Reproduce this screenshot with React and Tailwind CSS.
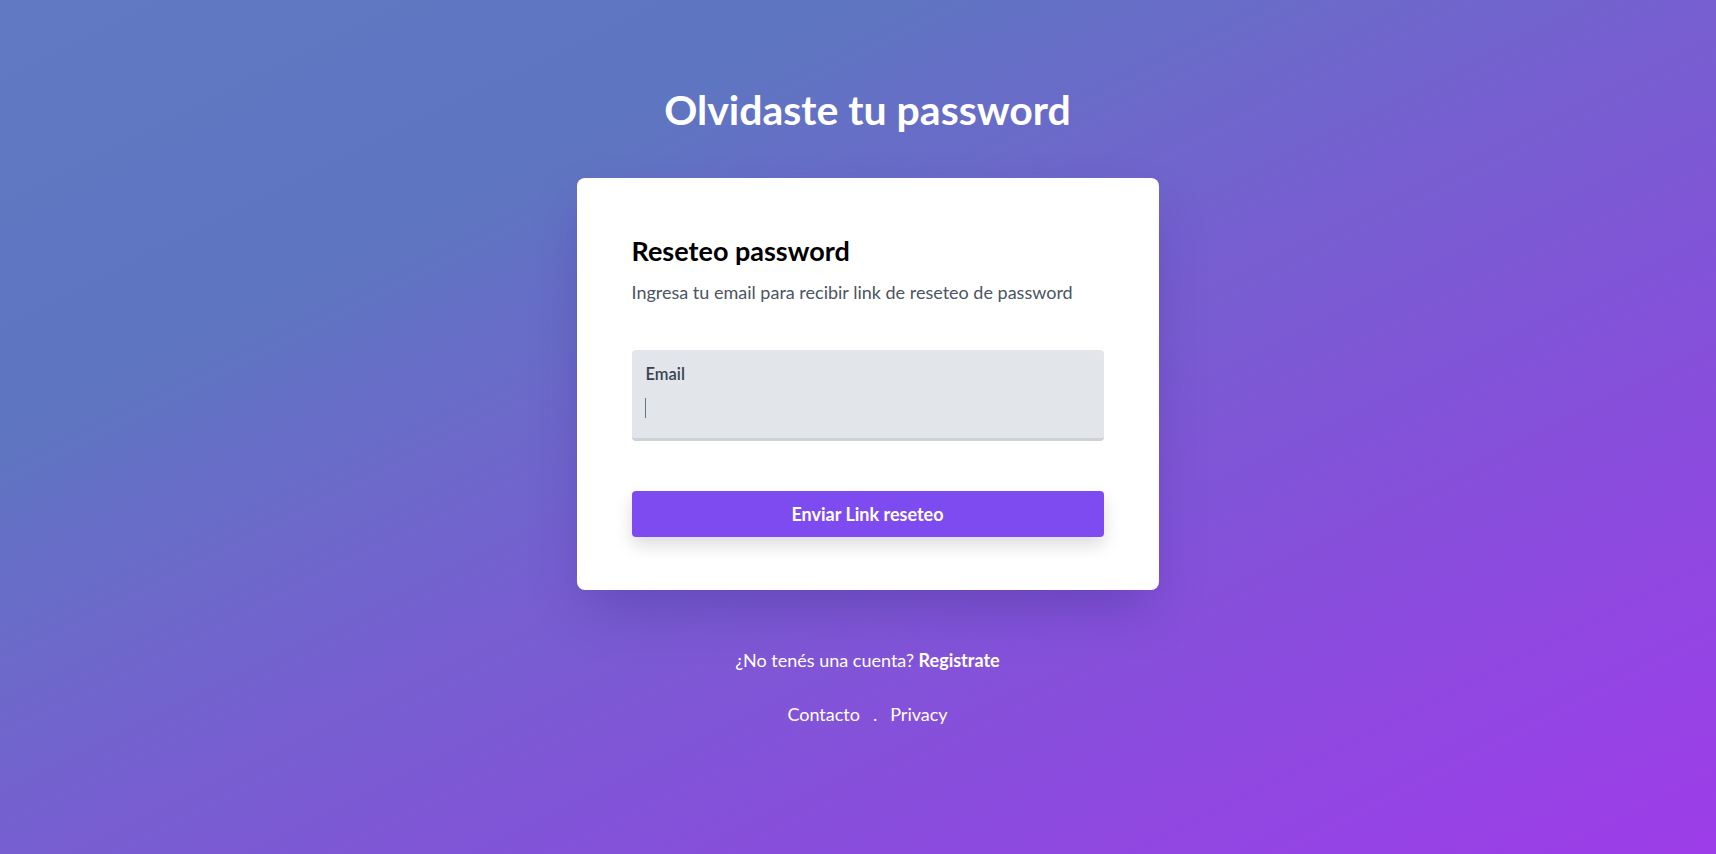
import { useState } from 'react';

const App = () => {
  const [email, setEmail] = useState('');

  return (
    <div
      className="min-h-screen w-full bg-[linear-gradient(to_bottom_right,#6179c3_0%,#5e76c1_25%,#765fd0_50%,#8a4cdd_75%,#9d3ce9_100%)] flex flex-col items-center pl-[19px] pt-[88px] text-white"
      style={{ fontFamily: 'Lato, "Open Sans", sans-serif' }}
    >
      <h1 className="text-[41px] leading-[44px] font-bold">Olvidaste tu password</h1>

      {/* Tarjeta */}
      <div className="mt-[46px] w-[582px] bg-white rounded-lg shadow-2xl shadow-[#3b2a8a]/40 px-[55px] pt-[57px] pb-[53px]">
        <h2 className="text-[27px] leading-8 font-bold text-black">Reseteo password</h2>
        <p className="mt-[12px] text-[18px] leading-[26px] text-[#4b5563]">
          Ingresa tu email para recibir link de reseteo de password
        </p>

        <div className="mt-[45px] relative h-[91px] bg-[#e2e6ea] rounded border-b-[3px] border-[#cdd2d8] px-[14px] pt-[14px]">
          <label htmlFor="email" className="block text-[16.5px] leading-5 font-semibold text-[#374151]">
            Email
          </label>
          <input
            id="email"
            type="email"
            value={email}
            onChange={(e) => setEmail(e.target.value)}
            className="w-full bg-transparent outline-none text-base text-gray-800 mt-[12px] h-6"
          />
          {email === '' && (
            <span className="absolute left-[13px] top-[48px] w-px h-5 bg-[#6b7280]"></span>
          )}
        </div>

        <button className="mt-[50px] w-full h-[46px] rounded bg-[#7d4bef] text-white text-[18px] font-bold shadow-[0_8px_18px_rgba(0,0,0,0.14)]">
          Enviar Link reseteo
        </button>
      </div>

      <p className="mt-[57px] text-[18px] leading-[26px]">
        ¿No tenés una cuenta? <a href="#" className="font-bold">Registrate</a>
      </p>

      <div className="mt-[28px] flex items-center gap-[13px] text-[18px] leading-[26px]">
        <a href="#">Contacto</a>
        <span>.</span>
        <a href="#">Privacy</a>
      </div>
    </div>
  );
};

export default App;
